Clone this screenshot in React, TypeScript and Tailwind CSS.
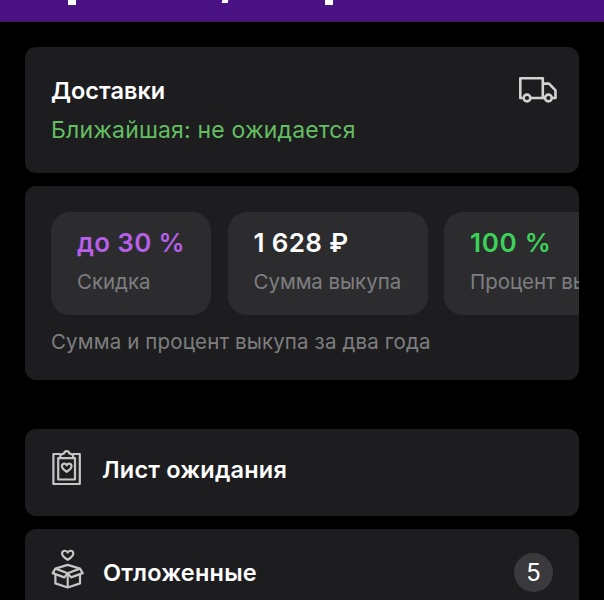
import type { ReactNode } from "react";
import clsx from "clsx";

interface Stat {
  value: string;
  label: string;
  className: string;
  valueClassName: string;
}

const stats: Stat[] = [
  {
    value: "до 30 %",
    label: "Скидка",
    className: "w-[160px]",
    valueClassName: "text-[#b65fe8] tracking-[0.3px]",
  },
  {
    value: "1 628 ₽",
    label: "Сумма выкупа",
    className: "w-[200px]",
    valueClassName: "text-white tracking-[0.35px]",
  },
  {
    value: "100 %",
    label: "Процент выкупа",
    className: "w-[220px]",
    valueClassName: "text-[#3cd158] tracking-[0.7px]",
  },
];

function TruckIcon() {
  return (
    <svg
      className="w-[38px] h-[28px]"
      viewBox="0 0 38 28"
      fill="none"
      stroke="#d2d2d3"
      strokeWidth="2.6"
      strokeLinejoin="round"
    >
      <path d="M3.5 22H1.3V2.2h22.5V22H11.5" />
      <path d="M23.8 7.6h6.2l6.5 6.8V22h-3.2M23.8 22h1.5" />
      <circle cx="8" cy="22" r="3.4" />
      <circle cx="29.4" cy="22" r="3.4" />
    </svg>
  );
}

function WaitlistIcon() {
  return (
    <svg
      className="w-[32px] h-[38px]"
      viewBox="0 0 32 38"
      fill="none"
      stroke="#c6c6c7"
      strokeWidth="2.2"
      strokeLinejoin="round"
    >
      <path d="M9.5 5H2.4v30h26.4V5h-7.1" />
      <path d="M7.2 9.2H24v21.3H7.2z" />
      <path d="M9.3 9.2V7c0-1.4 1-2 2.4-2.2l1.3-.2c.4-1.6 1.4-2.5 2.7-2.5s2.3.9 2.7 2.5l1.3.2c1.4.2 2.4.8 2.4 2.2v2.2" />
      <path d="M15.7 22.8c-3.1-1.9-4.8-3.6-4.8-5.5 0-3.2 3.6-3.4 4.8-1 1.2-2.4 4.8-2.2 4.8 1 0 1.9-1.7 3.6-4.8 5.5z" />
    </svg>
  );
}

function BoxIcon() {
  return (
    <svg
      className="w-[33px] h-[40px]"
      viewBox="0 0 33 40"
      fill="none"
      stroke="#c6c6c7"
      strokeWidth="2.2"
      strokeLinejoin="round"
    >
      <path d="M16.7 10.8c-3.7-2.1-5.6-4.1-5.6-6.2 0-3.4 4.3-3.8 5.6-1 1.3-2.8 5.6-2.4 5.6 1 0 2.1-1.9 4.1-5.6 6.2z" />
      <path d="M4.4 19.6 16.7 15.9 29 19.6l-12.3 4.6z" />
      <path d="M4.4 19.6 1.7 24.1l11.6 4.3 3.4-4.2 3.4 4.2 11.6-4.3-2.7-4.5" />
      <path d="M4.4 25.2v9.2l12.3 4.1L29 34.4v-9.2M16.7 24.2v14.3" />
    </svg>
  );
}

function Card({ className, children }: { className?: string; children: ReactNode }) {
  return (
    <section className={clsx("shrink-0 rounded-[11px] bg-[#1d1d1f]", className)}>
      {children}
    </section>
  );
}

function StatTile({ stat }: { stat: Stat }) {
  return (
    <div
      className={clsx(
        "h-[103px] shrink-0 rounded-[19px] bg-[#2c2c2e] pl-[26px] pt-4",
        stat.className
      )}
    >
      <div
        className={clsx(
          "text-[26px] leading-[30px] font-semibold whitespace-nowrap",
          stat.valueClassName
        )}
      >
        {stat.value}
      </div>
      <div className="mt-[10px] text-[20.5px] leading-[28px] tracking-[-0.05px] whitespace-nowrap text-[#7e7e80]">
        {stat.label}
      </div>
    </div>
  );
}

interface MenuRowProps {
  icon: ReactNode;
  title: string;
  titleClassName: string;
  count?: number;
}

function MenuRow({ icon, title, titleClassName, count }: MenuRowProps) {
  return (
    <div className="flex h-[87px] items-start px-[26px] pt-5">
      {icon}
      <span
        className={clsx(
          "flex-1 text-[23.5px] leading-7 font-semibold tracking-[0.2px] text-white",
          titleClassName
        )}
      >
        {title}
      </span>
      {count !== undefined && (
        <span className="mt-1 flex size-[39px] items-center justify-center rounded-full bg-[#3a3a3c] text-[24px] text-white">
          {count}
        </span>
      )}
    </div>
  );
}

export default function App() {
  return (
    <div className="flex h-[600px] w-[604px] flex-col overflow-hidden bg-black font-['Inter',sans-serif]">
      {/* Banner, scrolled almost out of view */}
      <header className="flex h-[22px] shrink-0 items-start border-b border-[#3b1a62] bg-[#4a1282] pl-[68px]">
        <span className="h-[5px] w-2 bg-white" />
        <span className="ml-[146px] h-[3px] w-[6px] -skew-x-12 bg-white" />
        <span className="ml-[97px] h-[5px] w-2 bg-white" />
      </header>

      <main className="flex flex-col px-[25px] pt-[25px]">
        <Card className="flex h-[126px] items-start justify-between pt-[29px] pl-[26px] pr-[22px]">
          <div>
            <h2 className="text-[23.5px] leading-[30px] font-semibold text-white">Доставки</h2>
            <p className="mt-2 text-[23px] leading-[32px] tracking-[0.18px] text-[#63bf62]">
              Ближайшая: не ожидается
            </p>
          </div>
          <TruckIcon />
        </Card>

        <Card className="mt-[13px] h-[194px] overflow-hidden pt-[26px] pl-[26px]">
          <div className="flex gap-[16.5px]">
            {stats.map((stat) => (
              <StatTile key={stat.label} stat={stat} />
            ))}
          </div>
          <p className="mt-[13px] text-[20.5px] leading-[28px] tracking-[0.14px] text-[#7e7e80]">
            Сумма и процент выкупа за два года
          </p>
        </Card>

        <Card className="mt-[49px]">
          <MenuRow
            icon={<WaitlistIcon />}
            title="Лист ожидания"
            titleClassName="ml-[19px] mt-[7px]"
          />
        </Card>
        <Card className="mt-[13px]">
          <MenuRow
            icon={<BoxIcon />}
            title="Отложенные"
            titleClassName="ml-[19px] mt-[10px]"
            count={5}
          />
        </Card>
      </main>
    </div>
  );
}
